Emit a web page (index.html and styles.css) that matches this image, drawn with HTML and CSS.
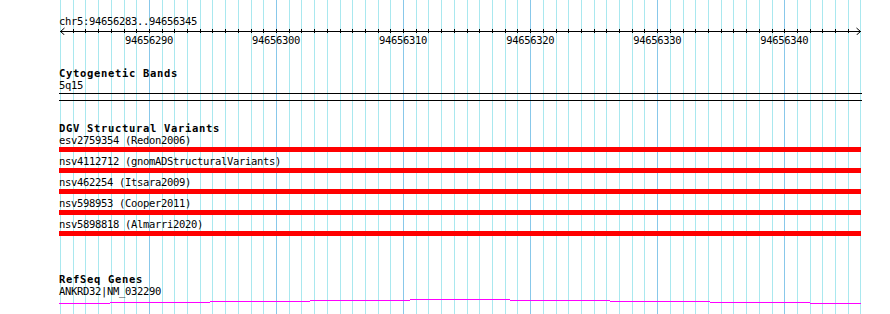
FILE: index.html
```html
<!DOCTYPE html>
<html lang="en">
<head>
<meta charset="utf-8">
<title>chr5:94656283..94656345</title>
<link rel="stylesheet" href="styles.css">
</head>
<body>
<div class="view">
  <svg class="grid" width="890" height="314" viewBox="0 0 890 314" aria-hidden="true">
    <path class="grid-minor" d="M60.5 0V314M73.5 0V314M85.5 0V314M98.5 0V314M111.5 0V314M124.5 0V314M136.5 0V314M162.5 0V314M174.5 0V314M187.5 0V314M200.5 0V314M212.5 0V314M225.5 0V314M238.5 0V314M251.5 0V314M263.5 0V314M289.5 0V314M301.5 0V314M314.5 0V314M327.5 0V314M340.5 0V314M352.5 0V314M365.5 0V314M378.5 0V314M390.5 0V314M416.5 0V314M428.5 0V314M441.5 0V314M454.5 0V314M467.5 0V314M479.5 0V314M492.5 0V314M505.5 0V314M517.5 0V314M543.5 0V314M556.5 0V314M568.5 0V314M581.5 0V314M594.5 0V314M606.5 0V314M619.5 0V314M632.5 0V314M644.5 0V314M670.5 0V314M683.5 0V314M695.5 0V314M708.5 0V314M721.5 0V314M733.5 0V314M746.5 0V314M759.5 0V314M772.5 0V314M797.5 0V314M810.5 0V314M822.5 0V314M835.5 0V314M848.5 0V314M860.5 0V314"/>
    <path class="grid-major" d="M149.5 0V314M276.5 0V314M403.5 0V314M530.5 0V314M657.5 0V314M784.5 0V314"/>
  </svg>

  <div class="tracks">
    <div class="locus">chr5:94656283..94656345</div>

    <svg class="ruler" width="890" height="8" viewBox="0 0 890 8" aria-hidden="true">
      <path class="ruler-line" d="M60 4.5H861"/>
      <path class="ruler-ticks" d="M73.5 2V6M85.5 2V6M98.5 2V6M111.5 2V6M124.5 2V6M136.5 2V6M149.5 2V6M162.5 2V6M174.5 2V6M187.5 2V6M200.5 2V6M212.5 2V6M225.5 2V6M238.5 2V6M251.5 2V6M263.5 2V6M276.5 2V6M289.5 2V6M301.5 2V6M314.5 2V6M327.5 2V6M340.5 2V6M352.5 2V6M365.5 2V6M378.5 2V6M390.5 2V6M403.5 2V6M416.5 2V6M428.5 2V6M441.5 2V6M454.5 2V6M467.5 2V6M479.5 2V6M492.5 2V6M505.5 2V6M517.5 2V6M530.5 2V6M543.5 2V6M556.5 2V6M568.5 2V6M581.5 2V6M594.5 2V6M606.5 2V6M619.5 2V6M632.5 2V6M644.5 2V6M657.5 2V6M670.5 2V6M683.5 2V6M695.5 2V6M708.5 2V6M721.5 2V6M733.5 2V6M746.5 2V6M759.5 2V6M772.5 2V6M784.5 2V6M797.5 2V6M810.5 2V6M822.5 2V6M835.5 2V6M848.5 2V6"/>
      <path class="ruler-arrow" d="M64.5 1L60.5 4.5L64.5 8M856.5 1L860.5 4.5L856.5 8"/>
    </svg>

    <div class="ruler-labels">
      <span>94656290</span>
      <span>94656300</span>
      <span>94656310</span>
      <span>94656320</span>
      <span>94656330</span>
      <span>94656340</span>
    </div>

    <section class="track track-cyto">
      <h2 class="track-title">Cytogenetic Bands</h2>
      <div class="feature-label">5q15</div>
      <div class="band"></div>
    </section>

    <section class="track track-dgv">
      <h2 class="track-title">DGV Structural Variants</h2>
      <div class="feature-list">
        <div class="feature">
          <div class="feature-label">esv2759354 (Redon2006)</div>
          <div class="bar"></div>
        </div>
        <div class="feature">
          <div class="feature-label">nsv4112712 (gnomADStructuralVariants)</div>
          <div class="bar"></div>
        </div>
        <div class="feature">
          <div class="feature-label">nsv462254 (Itsara2009)</div>
          <div class="bar"></div>
        </div>
        <div class="feature">
          <div class="feature-label">nsv598953 (Cooper2011)</div>
          <div class="bar"></div>
        </div>
        <div class="feature">
          <div class="feature-label">nsv5898818 (Almarri2020)</div>
          <div class="bar"></div>
        </div>
      </div>
    </section>

    <section class="track track-refseq">
      <h2 class="track-title">RefSeq Genes</h2>
      <div class="feature-label">ANKRD32|NM_032290</div>
      <svg class="gene" width="890" height="7" viewBox="0 0 890 7" aria-hidden="true">
        <rect x="59" y="6" width="51" height="1"/>
        <rect x="110" y="5" width="100" height="1"/>
        <rect x="210" y="4" width="100" height="1"/>
        <rect x="310" y="3" width="100" height="1"/>
        <rect x="410" y="2" width="100" height="1"/>
        <rect x="510" y="3" width="100" height="1"/>
        <rect x="610" y="4" width="100" height="1"/>
        <rect x="710" y="5" width="100" height="1"/>
        <rect x="810" y="6" width="51" height="1"/>
      </svg>
    </section>
  </div>
</div>
</body>
</html>
```

FILE: styles.css
```css
* {
  box-sizing: border-box;
}

html,
body {
  margin: 0;
  padding: 0;
  background: #ffffff;
}

body {
  width: 890px;
  height: 314px;
  overflow: hidden;
  font-family: "DejaVu Sans Mono", "Liberation Mono", monospace;
  font-size: 10px;
  color: #000000;
}

.view {
  position: relative;
  width: 890px;
  height: 314px;
}

.grid {
  position: absolute;
  left: 0;
  top: 0;
  display: block;
}

.grid path {
  fill: none;
  stroke-width: 1;
  shape-rendering: crispEdges;
}

.grid-minor {
  stroke: #a9e8ef;
}

.grid-major {
  stroke: #88c8ea;
}

.tracks {
  position: relative;
  padding-top: 16px;
}

.locus,
.feature-label,
.ruler-labels {
  font-size: 10.5px;
  letter-spacing: -0.32px;
  line-height: 11px;
  white-space: nowrap;
}

.locus,
.feature-label {
  padding-left: 59px;
}

.ruler,
.gene {
  display: block;
}

.ruler path {
  fill: none;
  stroke: #000000;
  stroke-width: 1;
}

.ruler-line,
.ruler-ticks {
  shape-rendering: crispEdges;
}

.ruler-labels {
  display: flex;
  padding-left: 85.47px;
}

.ruler-labels span {
  flex: none;
  width: 127.06px;
  text-align: center;
}

.track-title {
  margin: 0;
  font-size: 10.5px;
  font-weight: bold;
  letter-spacing: 0.68px;
  line-height: 11px;
  padding-left: 59px;
  white-space: nowrap;
}

.track-title + .feature-label {
  margin-top: 1px;
}

.track-cyto {
  margin-top: 22px;
}

.band {
  margin: 2px 0 0 59px;
  width: 803px;
  height: 8px;
  border-top: 1px solid #000000;
  border-bottom: 1px solid #000000;
}

.track-dgv {
  margin-top: 22px;
}

.feature-list {
  display: flex;
  flex-direction: column;
  gap: 4px;
  padding-top: 1px;
}

.bar {
  margin: 1px 0 0 59px;
  width: 802px;
  height: 5px;
  background: #ff0000;
}

.track-refseq {
  margin-top: 38px;
}

.gene rect {
  fill: #ff00ff;
  shape-rendering: crispEdges;
}
```
